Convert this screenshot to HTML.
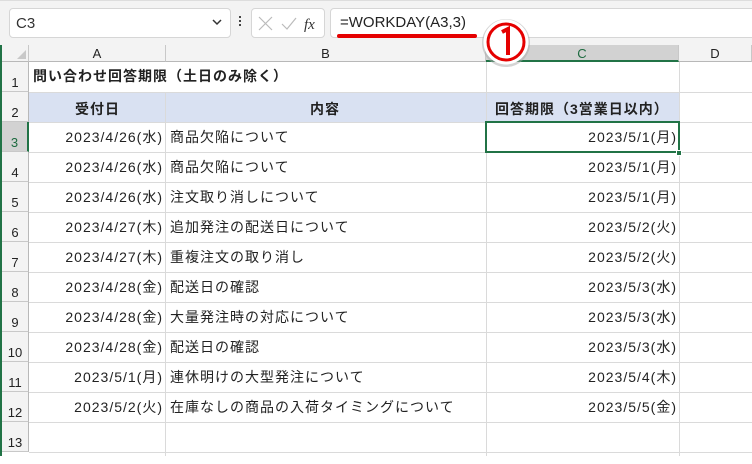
<!DOCTYPE html>
<html><head><meta charset="utf-8"><style>
*{margin:0;padding:0;box-sizing:border-box}
body{width:752px;height:456px;overflow:hidden;background:#fff;font-family:"Liberation Sans","Noto Sans CJK JP",sans-serif;position:relative}
.top{position:absolute;left:0;top:0;width:752px;height:45px;background:#f3f3f3;border-top:1px solid #ddd}
.box{position:absolute;background:#fff;border:1px solid #d6d6d6;border-radius:4px}
.colh{position:absolute;top:45px;height:17px;background:#f3f3f3;border-right:1px solid #c8c8c8;border-bottom:1px solid #b8b8b8;font-size:13px;text-align:center;line-height:17px;color:#222}
.rowh{position:absolute;left:2px;width:27px;background:#f3f3f3;border-bottom:1px solid #c8c8c8;border-right:1px solid #b8b8b8;font-size:13px;text-align:center;color:#222}
.hl{position:absolute;left:29px;width:723px;height:1px;background:#dadada}
.vl{position:absolute;top:62px;width:1px;height:394px;background:#dadada}
.t{position:absolute;font-size:14px;color:#222;white-space:nowrap;letter-spacing:1px;line-height:30px}
.r{text-align:right}
</style></head><body>
<div class="top"></div>
<div class="box" style="left:9px;top:8px;width:222px;height:30px"></div>
<div style="position:absolute;left:16px;top:15px;font-size:15px;color:#333">C3</div>
<svg style="position:absolute;left:212px;top:18px" width="10" height="8"><path d="M1 2 L5 6 L9 2" stroke="#333" stroke-width="1.5" fill="none"/></svg>
<div style="position:absolute;left:239px;top:16px;width:2px;height:2px;background:#444;box-shadow:0 4px #444,0 8px #444"></div>
<div class="box" style="left:251px;top:8px;width:74px;height:30px"></div>
<svg style="position:absolute;left:258px;top:15px" width="64" height="18"><path d="M1 2 L14 15 M14 2 L1 15" stroke="#bbb" stroke-width="1.2"/><path d="M24 9 L29 14 L38 3" stroke="#bbb" stroke-width="1.2" fill="none"/><text x="46" y="14" font-family="Liberation Serif" font-style="italic" font-size="15" fill="#333">fx</text></svg>
<div class="box" style="left:330px;top:8px;width:430px;height:30px;border-radius:4px 0 0 4px"></div>
<div style="position:absolute;left:340px;top:14px;font-size:15px;color:#222">=WORKDAY(A3,3)</div>
<div style="position:absolute;left:337px;top:34px;width:140px;height:4px;background:#e50000;border-radius:2px"></div>
<!-- column headers -->
<div class="colh" style="left:0;width:29px;background:#f3f3f3"></div>
<svg style="position:absolute;left:16px;top:49px" width="11" height="11"><path d="M10 1 L10 10 L1 10Z" fill="#c8c8c8"/></svg>
<div class="colh" style="left:29px;width:137px">A</div>
<div class="colh" style="left:166px;width:320px">B</div>
<div class="colh" style="left:486px;width:193px;background:#d2d2d2;color:#1e6b40;border-bottom:2px solid #217346">C</div>
<div class="colh" style="left:679px;width:73px">D</div>
<div style="position:absolute;left:0;top:45px;width:2px;height:411px;background:#217346"></div>
<!-- row 2 fill -->
<div style="position:absolute;left:29px;top:92px;width:650px;height:30px;background:#d9e1f2"></div>
<!-- grid -->
<div class="vl" style="left:165px"></div><div class="vl" style="left:486px"></div><div class="vl" style="left:679px"></div>
<div class="hl" style="top:92px"></div><div class="hl" style="top:122px"></div><div class="hl" style="top:152px"></div><div class="hl" style="top:182px"></div><div class="hl" style="top:212px"></div><div class="hl" style="top:242px"></div><div class="hl" style="top:272px"></div><div class="hl" style="top:302px"></div><div class="hl" style="top:332px"></div><div class="hl" style="top:362px"></div><div class="hl" style="top:392px"></div><div class="hl" style="top:422px"></div><div class="hl" style="top:452px"></div>
<div style="position:absolute;left:29px;top:62px;width:723px;height:30px;background:#fff"></div>
<div style="position:absolute;left:486px;top:62px;width:1px;height:30px;background:#dadada"></div>
<div style="position:absolute;left:679px;top:62px;width:1px;height:30px;background:#dadada"></div>
<!-- row headers -->
<div class="rowh" style="top:62px;height:30px;line-height:42px">1</div>
<div class="rowh" style="top:92px;height:30px;line-height:42px">2</div>
<div class="rowh" style="top:122px;height:30px;line-height:42px;background:#d2d2d2;color:#1e6b40;border-right:2px solid #217346">3</div>
<div class="rowh" style="top:152px;height:30px;line-height:42px">4</div>
<div class="rowh" style="top:182px;height:30px;line-height:42px">5</div>
<div class="rowh" style="top:212px;height:30px;line-height:42px">6</div>
<div class="rowh" style="top:242px;height:30px;line-height:42px">7</div>
<div class="rowh" style="top:272px;height:30px;line-height:42px">8</div>
<div class="rowh" style="top:302px;height:30px;line-height:42px">9</div>
<div class="rowh" style="top:332px;height:30px;line-height:42px">10</div>
<div class="rowh" style="top:362px;height:30px;line-height:42px">11</div>
<div class="rowh" style="top:392px;height:30px;line-height:42px">12</div>
<div class="rowh" style="top:422px;height:30px;line-height:42px">13</div>
<!-- text -->
<div class="t" style="left:33px;top:62px;font-weight:bold;line-height:28px">問い合わせ回答期限（土日のみ除く）</div>
<div class="t" style="left:75px;top:94px;font-weight:bold">受付日</div>
<div class="t" style="left:310px;top:94px;font-weight:bold">内容</div>
<div class="t" style="left:495px;top:94px;font-weight:bold">回答期限（3営業日以内）</div>

<div class="t r" style="right:589px;top:122px">2023/4/26(水)</div><div class="t" style="left:170px;top:122px">商品欠陥について</div><div class="t r" style="right:75px;top:122px">2023/5/1(月)</div>
<div class="t r" style="right:589px;top:152px">2023/4/26(水)</div><div class="t" style="left:170px;top:152px">商品欠陥について</div><div class="t r" style="right:75px;top:152px">2023/5/1(月)</div>
<div class="t r" style="right:589px;top:182px">2023/4/26(水)</div><div class="t" style="left:170px;top:182px">注文取り消しについて</div><div class="t r" style="right:75px;top:182px">2023/5/1(月)</div>
<div class="t r" style="right:589px;top:212px">2023/4/27(木)</div><div class="t" style="left:170px;top:212px">追加発注の配送日について</div><div class="t r" style="right:75px;top:212px">2023/5/2(火)</div>
<div class="t r" style="right:589px;top:242px">2023/4/27(木)</div><div class="t" style="left:170px;top:242px">重複注文の取り消し</div><div class="t r" style="right:75px;top:242px">2023/5/2(火)</div>
<div class="t r" style="right:589px;top:272px">2023/4/28(金)</div><div class="t" style="left:170px;top:272px">配送日の確認</div><div class="t r" style="right:75px;top:272px">2023/5/3(水)</div>
<div class="t r" style="right:589px;top:302px">2023/4/28(金)</div><div class="t" style="left:170px;top:302px">大量発注時の対応について</div><div class="t r" style="right:75px;top:302px">2023/5/3(水)</div>
<div class="t r" style="right:589px;top:332px">2023/4/28(金)</div><div class="t" style="left:170px;top:332px">配送日の確認</div><div class="t r" style="right:75px;top:332px">2023/5/3(水)</div>
<div class="t r" style="right:589px;top:362px">2023/5/1(月)</div><div class="t" style="left:170px;top:362px">連休明けの大型発注について</div><div class="t r" style="right:75px;top:362px">2023/5/4(木)</div>
<div class="t r" style="right:589px;top:392px">2023/5/2(火)</div><div class="t" style="left:170px;top:392px">在庫なしの商品の入荷タイミングについて</div><div class="t r" style="right:75px;top:392px">2023/5/5(金)</div>
<!-- selection -->
<div style="position:absolute;left:485px;top:121px;width:195px;height:32px;border:2px solid #217346"></div>
<div style="position:absolute;left:676px;top:150px;width:6px;height:6px;background:#217346;border:1px solid #fff"></div>
<!-- circled 1 -->
<svg style="position:absolute;left:480px;top:18px" width="52" height="52"><circle cx="26" cy="25" r="20" fill="none" stroke="#aaa" stroke-width="8" opacity=".5"/><circle cx="26" cy="24" r="19" fill="#fff" stroke="#fff" stroke-width="7"/><circle cx="26" cy="24" r="18" fill="#fff" stroke="#e50000" stroke-width="3"/><path d="M22 14 L28 11 L28 37" stroke="#e50000" stroke-width="4" fill="none"/></svg>
</body></html>
